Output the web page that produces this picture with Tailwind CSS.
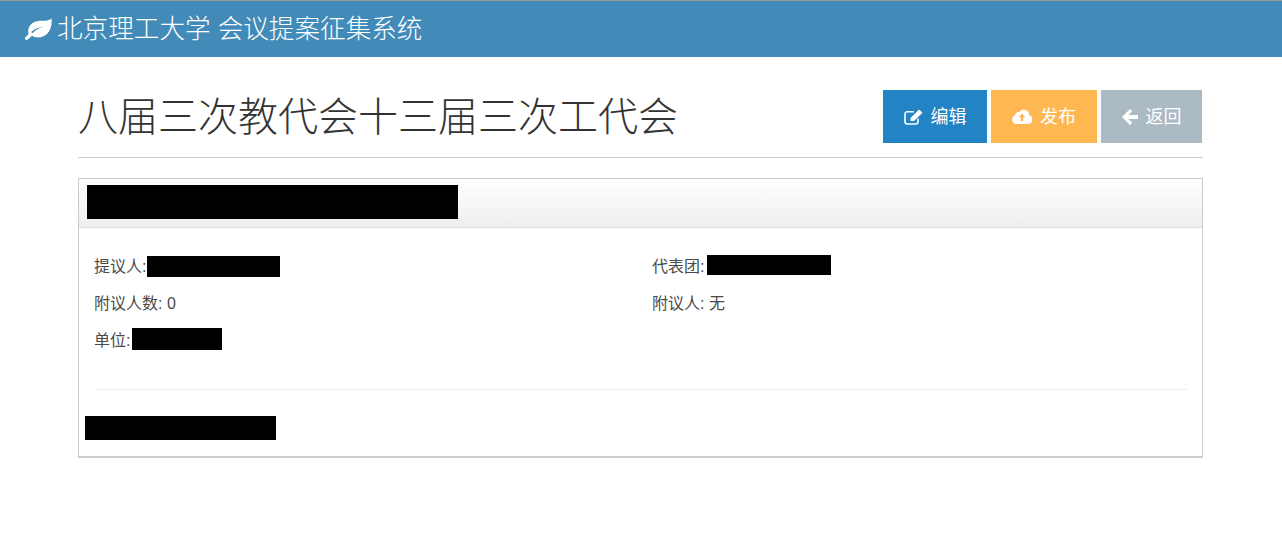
<!DOCTYPE html>
<html lang="zh-CN">
  <head>
    <meta charset="UTF-8" />
    <title>会议提案征集系统</title>
    <script src="https://cdn.jsdelivr.net/npm/@tailwindcss/browser@4"></script>
  </head>
  <body class="bg-white text-[#333] font-['Liberation_Sans','Noto_Sans_CJK_SC',sans-serif]">
    <!-- top bar -->
    <header class="h-[57px] bg-[#428bb9] border-t border-[#999] flex items-center pl-[25px] text-white">
      <svg class="w-[27px] h-[22px] mr-[5px]" viewBox="0 0 27 22">
        <path fill="currentColor" fill-rule="evenodd" d="M26.5 0.5C27.5 9 24 19 13.5 19.5C10.8 19.6 8.8 19 7 17.8L2.8 21.5C2 22.100 0.700 22 0.200 21.200C-0.200 20.500 0 19.700 0.600 19.100L3.600 16.300C1.800 10 6 3.800 13 3C18 2.500 23 3.500 26.500 0.500ZM7.500 15.200C10.500 12 14.500 9.700 19.500 8.500C14 9 9.500 11 6.200 14C6.500 14.500 7 15 7.500 15.200Z" />
      </svg>
      <span class="text-[25.6px] leading-none font-light pt-[2px]">北京理工大学 会议提案征集系统</span>
    </header>

    <main class="mx-[78px] w-[1125px]">
      <!-- page title + actions -->
      <div class="h-[101px] border-b border-[#ccc] flex items-start justify-between">
        <h1 class="text-[40px] leading-[53px] mt-[34px] font-light">八届三次教代会十三届三次工代会</h1>
        <div class="flex gap-[4px] mt-[33px] mr-px text-white text-[18px]">
          <a class="w-[104px] h-[53px] bg-[#2283c5] flex items-center justify-center gap-[8px]">
            <svg class="w-[19px] h-[16px]" viewBox="0 0 19 16" fill="none" stroke="currentColor" stroke-width="1.6">
              <path d="M14 9.500V12.800A2.200 2.200 0 0 1 11.800 15H3.200A2.200 2.200 0 0 1 1 12.800V5A2.200 2.200 0 0 1 3.200 2.800H10" />
              <path d="M6.500 12V9L15 0.500L18.500 3.800L10 12Z" fill="currentColor" stroke="none" />
            </svg>
            <span class="pt-[2px]">编辑</span>
          </a>
          <a class="w-[106px] h-[53px] bg-[#ffb752] flex items-center justify-center gap-[8px]">
            <svg class="w-[20px] h-[15px]" viewBox="0 0 20 15">
              <path fill="currentColor" d="M4.500 15A4.500 4.500 0 0 1 3 6.300A3.500 3.500 0 0 1 7.300 3A5.500 5.500 0 0 1 17.300 6.200A4.500 4.500 0 0 1 16 15Z" />
              <path fill="#ffb752" d="M10 4.500L13.500 8.200H11.200V12H8.800V8.200H6.500Z" />
            </svg>
            <span class="pt-[2px]">发布</span>
          </a>
          <a class="w-[101px] h-[53px] bg-[#abbac3] flex items-center justify-center gap-[8px]">
            <svg class="w-[16px] h-[16px]" viewBox="0 0 16 16" fill="currentColor">
              <path d="M8 0L10.200 2.200L6.400 6H16V10H6.400L10.200 13.800L8 16L0 8Z" />
            </svg>
            <span class="pt-[2px]">返回</span>
          </a>
        </div>
      </div>

      <!-- proposal panel -->
      <section class="mt-[20px] h-[280px] border border-[#ccc] border-b-2">
        <div class="h-[49px] border-b border-[#ddd] bg-gradient-to-b from-white to-[#eee] pl-[8px] pt-[6px]">
          <div class="w-[371px] h-[34px] bg-black"></div>
        </div>
        <div class="px-[15px] text-[#4a4a4a]">
          <div class="grid grid-cols-[558px_1fr] text-[16px] leading-[22px] h-[162px] border-b border-[#eee] pt-[27px] content-start gap-y-[15px]">
            <div class="flex items-center h-[22px]"><span class="pt-[2px]">提议人:</span><span class="w-[133px] h-[21px] bg-black ml-px"></span></div>
            <div class="flex items-center h-[22px]"><span class="pt-[2px]">代表团:</span><span class="w-[124px] h-[20px] bg-black ml-[3px] -translate-y-px"></span></div>
            <div class="h-[22px] pt-[1px]">附议人数: 0</div>
            <div class="h-[22px] pt-[1px]">附议人: 无</div>
            <div class="flex items-center h-[22px]"><span class="pt-[2px]">单位:</span><span class="w-[90px] h-[22px] bg-black ml-[2px] -translate-y-px"></span></div>
          </div>
        </div>
        <div class="pl-[6px] pt-[26px]">
          <div class="w-[191px] h-[24px] bg-black"></div>
        </div>
      </section>
    </main>
  </body>
</html>
